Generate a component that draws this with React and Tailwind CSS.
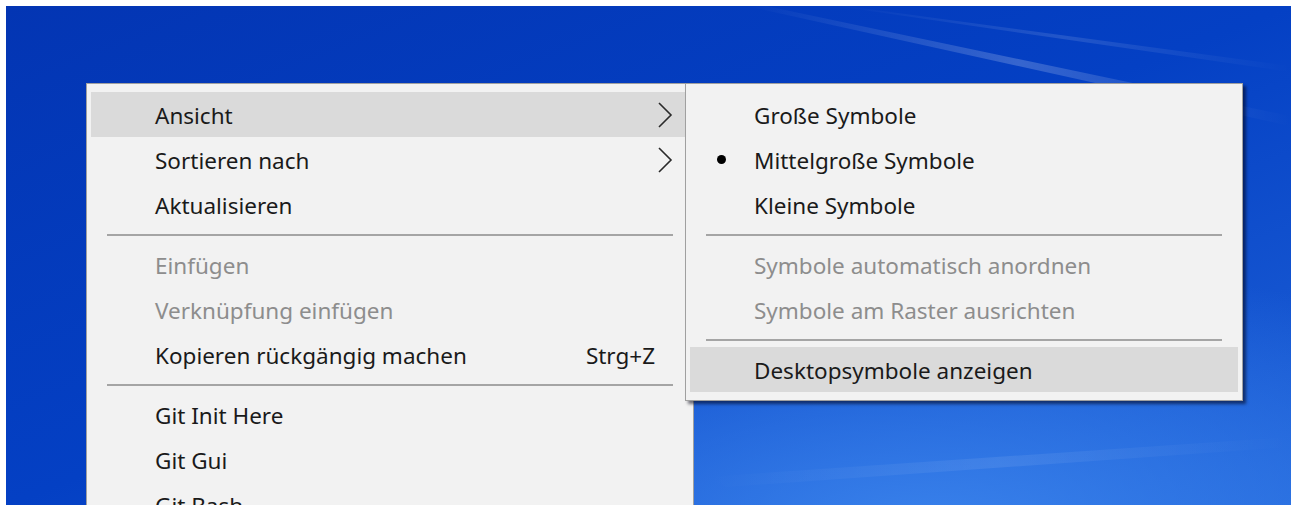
import React from 'react';

const mainSections = [
    [
        { label: 'Ansicht', arrow: true, active: true },
        { label: 'Sortieren nach', arrow: true },
        { label: 'Aktualisieren' },
    ],
    [
        { label: 'Einfügen', disabled: true },
        { label: 'Verknüpfung einfügen', disabled: true },
        { label: 'Kopieren rückgängig machen', shortcut: 'Strg+Z' },
    ],
    [
        { label: 'Git Init Here' },
        { label: 'Git Gui' },
        { label: 'Git Bash' },
    ],
];

const subSections = [
    [
        { label: 'Große Symbole' },
        { label: 'Mittelgroße Symbole', bullet: true },
        { label: 'Kleine Symbole' },
    ],
    [
        { label: 'Symbole automatisch anordnen', disabled: true },
        { label: 'Symbole am Raster ausrichten', disabled: true },
    ],
    [{ label: 'Desktopsymbole anzeigen', active: true }],
];

function Chevron() {
    return (
        <svg width="18" height="28" viewBox="0 0 18 28" className="shrink-0 -mt-[3px]">
            <path d="M3 2 L15 14 L3 26" fill="none" stroke="#2a2a2a" strokeWidth="1.6" />
        </svg>
    );
}

function Wallpaper() {
    return (
        <svg className="absolute inset-0 w-full h-full" viewBox="0 0 1285 498" preserveAspectRatio="none">
            <defs>
                <linearGradient id="base" x1="0" y1="0" x2="1" y2="1">
                    <stop offset="0" stopColor="#0335b3" />
                    <stop offset="0.5" stopColor="#0440c4" />
                    <stop offset="1" stopColor="#1f62d8" />
                </linearGradient>
                <radialGradient id="glow" cx="0.72" cy="1.05" r="0.55">
                    <stop offset="0" stopColor="#3d86ee" stopOpacity="0.9" />
                    <stop offset="1" stopColor="#3d86ee" stopOpacity="0" />
                </radialGradient>
                <linearGradient id="beam" x1="0" y1="0" x2="1" y2="0">
                    <stop offset="0" stopColor="#ffffff" stopOpacity="0" />
                    <stop offset="0.5" stopColor="#ffffff" stopOpacity="0.2" />
                    <stop offset="1" stopColor="#ffffff" stopOpacity="0" />
                </linearGradient>
            </defs>
            <rect width="1285" height="498" fill="url(#base)" />
            <rect width="1285" height="498" fill="url(#glow)" />
            <path d="M760 0 L1285 110 L1285 120 L740 0 Z" fill="url(#beam)" />
            <path d="M840 0 L1285 60 L1285 66 L830 0 Z" fill="url(#beam)" opacity="0.6" />
            <path d="M700 470 L1285 430 L1285 440 L720 480 Z" fill="url(#beam)" opacity="0.4" />
        </svg>
    );
}

function Separator() {
    return <div className="h-[15px] flex items-center mx-[16px]"><div className="h-[2px] w-full bg-[#a5a5a5]" /></div>;
}

export default function App() {
    return (
        <div className="w-[1300px] h-[512px] bg-white p-[6px_9px_7px_6px]" style={{ fontFamily: '"Noto Sans", "Open Sans", sans-serif' }}>
            <div className="relative w-full h-full overflow-hidden">
                <Wallpaper />

                <div className="absolute left-[80px] top-[77px] w-[608px] bg-[#f2f2f2] border border-[#a0a0a0] px-[4px] pt-[8px] pb-[8px]">
                    {mainSections.map((section, i) => (
                        <div key={i}>
                            {i > 0 && <Separator />}
                            {section.map((item) => (
                                <div
                                    key={item.label}
                                    className={`h-[45px] flex items-center pt-[3px] pl-[64px] pr-[15px] text-[22.5px] ${item.active ? 'bg-[#dadada]' : ''} ${item.disabled ? 'text-[#8d8d8d]' : 'text-[#1a1a1a]'}`}
                                >
                                    <span className="flex-1">{item.label}</span>
                                    {item.shortcut && <span className="pr-[19px]">{item.shortcut}</span>}
                                    {item.arrow && <Chevron />}
                                </div>
                            ))}
                        </div>
                    ))}
                </div>

                <div className="absolute left-[679px] top-[77px] w-[558px] bg-[#f2f2f2] border border-[#a0a0a0] px-[4px] pt-[8px] pb-[8px] shadow-[3px_3px_3px_rgba(0,0,20,0.55)]">
                    {subSections.map((section, i) => (
                        <div key={i}>
                            {i > 0 && <Separator />}
                            {section.map((item) => (
                                <div
                                    key={item.label}
                                    className={`h-[45px] flex items-center pt-[3px] text-[22.5px] ${item.active ? 'bg-[#dadada]' : ''} ${item.disabled ? 'text-[#8d8d8d]' : 'text-[#1a1a1a]'}`}
                                >
                                    <span className="w-[64px] flex justify-center -mt-[3px]">
                                        {item.bullet && <span className="w-[9px] h-[9px] rounded-full bg-black mr-[1px]" />}
                                    </span>
                                    <span>{item.label}</span>
                                </div>
                            ))}
                        </div>
                    ))}
                </div>
            </div>
        </div>
    );
}
